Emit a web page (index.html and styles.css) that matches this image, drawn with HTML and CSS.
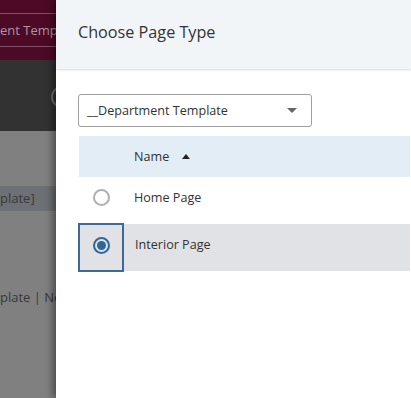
FILE: index.html
```html
<!DOCTYPE html>
<html lang="en">
<head>
  <meta charset="UTF-8" />
  <meta name="viewport" content="width=device-width, initial-scale=1.0"/>
  <title>Choose Page Type</title>
  <link rel="stylesheet" href="styles.css">
</head>
<body>

  <!-- Page behind the drawer (dimmed) -->
  <div class="backdrop">
    <div class="site-bar">
      <div class="site-title">ent Template</div>
    </div>
    <div class="toolbar">
      <span class="tool-circle"></span>
    </div>
    <div class="page-body">
      <div class="crumb-row">plate]</div>
      <div class="path-row">plate | New</div>
    </div>
  </div>

  <!-- Drawer -->
  <aside class="drawer">
    <header class="drawer-head">
      <h2>Choose Page Type</h2>
    </header>

    <div class="drawer-body">
      <div class="select">
        <span>__Department Template</span>
        <span class="caret"></span>
      </div>

      <table class="types">
        <thead>
          <tr>
            <th class="pick"></th>
            <th>Name <span class="sort"></span></th>
          </tr>
        </thead>
        <tbody>
          <tr>
            <td class="pick"><span class="radio"></span></td>
            <td>Home Page</td>
          </tr>
          <tr class="selected">
            <td class="pick"><span class="radio on"></span></td>
            <td>Interior Page</td>
          </tr>
        </tbody>
      </table>
    </div>
  </aside>

</body>
</html>
```

FILE: styles.css
```css
/* Base */
* {
  margin: 0;
  padding: 0;
  box-sizing: border-box;
}

body {
  width: 411px;
  height: 398px;
  overflow: hidden;
  font-family: "Open Sans", "Noto Sans", Arial, sans-serif;
  color: #333;
  background: #808080;
  position: relative;
}

/* Dimmed page behind */
.backdrop {
  width: 100%;
  height: 100%;
}

.site-bar {
  height: 60px;
  background: #4d0a26;
  padding-top: 13px;
}

.site-title {
  height: 34px;
  border-top: 1px solid #7d5266;
  border-bottom: 1px solid #7d5266;
  color: #ad95a0;
  font-size: 13px;
  line-height: 32px;
  white-space: nowrap;
}

.toolbar {
  height: 71px;
  background: #323232;
  padding: 26px 0 0 51px;
}

.tool-circle {
  display: block;
  width: 22px;
  height: 22px;
  border: 2px solid #6e6e6e;
  border-radius: 50%;
}

.page-body {
  padding-top: 55px;
}

.crumb-row {
  height: 25px;
  background: #6d7074;
  color: #3a3a3a;
  font-size: 13px;
  line-height: 25px;
  white-space: nowrap;
}

.path-row {
  margin-top: 77px;
  color: #383838;
  font-size: 13px;
  white-space: nowrap;
}

/* Drawer */
.drawer {
  position: absolute;
  top: 0;
  left: 56px;
  right: 0;
  bottom: 0;
  background: white;
  box-shadow: -3px 0 8px rgba(0, 0, 0, 0.45);
}

.drawer-head {
  height: 69px;
  background: #f2f5f8;
  box-shadow: 0 1px 2px rgba(0, 0, 0, 0.15);
  padding: 21px 22px 0;
}

.drawer-head h2 {
  font-size: 16.2px;
  font-weight: 400;
  color: #333;
}

.drawer-body {
  padding: 25px 0 0 22px;
}

.select {
  width: 234px;
  height: 33px;
  border: 1px solid #a0a0a0;
  border-radius: 3px;
  display: flex;
  justify-content: space-between;
  align-items: center;
  padding: 0 14px 0 8px;
  font-size: 12.6px;
  color: #333;
}

.caret {
  width: 0;
  height: 0;
  border-left: 5px solid transparent;
  border-right: 5px solid transparent;
  border-top: 5px solid #666;
}

/* Table */
.types {
  margin-top: 9px;
  width: 100%;
  border-collapse: collapse;
  font-size: 12.6px;
}

.types th {
  height: 41px;
  background: #e3edf6;
  text-align: left;
  font-weight: 400;
  color: #333;
}

.types td {
  height: 47px;
  padding-bottom: 6px;
}

.types .pick {
  width: 44px;
  text-align: center;
}

.types th:not(.pick),
.types td:not(.pick) {
  padding-left: 11px;
}

.sort {
  display: inline-block;
  width: 0;
  height: 0;
  margin-left: 10px;
  vertical-align: 2px;
  border-left: 4px solid transparent;
  border-right: 4px solid transparent;
  border-bottom: 5px solid #222;
}

.selected td {
  background: #e1e2e5;
}

.selected .pick {
  border: 2px solid #3b6b94;
  border-radius: 3px;
}

.radio {
  display: inline-block;
  width: 17px;
  height: 17px;
  border: 2px solid #b0b0b0;
  border-radius: 50%;
  vertical-align: middle;
  position: relative;
}

.radio.on {
  border-color: #2f6898;
}

.radio.on::after {
  content: "";
  position: absolute;
  top: 2px;
  left: 2px;
  width: 9px;
  height: 9px;
  border-radius: 50%;
  background: #2f6898;
}
```
